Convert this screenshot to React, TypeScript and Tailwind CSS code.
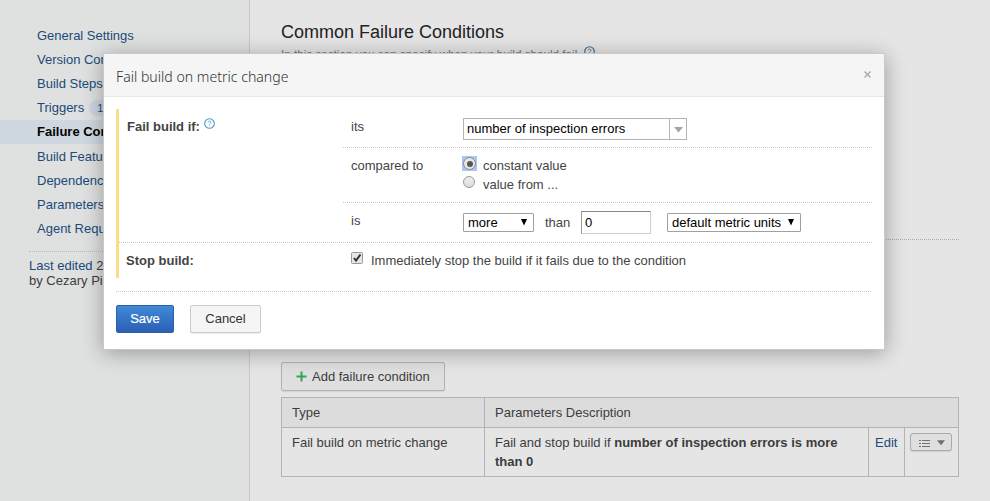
import type { ReactNode } from 'react';

const navItems = [
  'General Settings',
  'Version Control Settings',
  'Build Steps',
  'Triggers',
  'Failure Conditions',
  'Build Features',
  'Dependencies',
  'Parameters',
  'Agent Requirements',
];

function HelpIcon({ className = '' }: { className?: string }) {
  return (
    <svg width="11" height="11" viewBox="0 0 11 11" className={`shrink-0 ${className}`} fill="none">
      <circle cx="5.5" cy="5.5" r="4.8" stroke="currentColor" strokeWidth="1.1" />
      <path d="M4 4.4C4 2.6 7 2.6 7 4.3C7 5.4 5.5 5.3 5.5 6.6M5.5 7.4V8.3" stroke="currentColor" strokeWidth="1" opacity="0.8" />
    </svg>
  );
}

function Caret({ className = '' }: { className?: string }) {
  return (
    <svg width="9" height="6" viewBox="0 0 9 6" className={className}>
      <path d="M0 0H9L4.5 5.5Z" fill="currentColor" />
    </svg>
  );
}

function NativeSelect({ label, width }: { label: string; width: string }) {
  return (
    <div className={`-mt-px flex h-[19px] justify-between rounded-[1px] border border-[#a0a0a0] bg-white pl-1 pr-1.5 text-black ${width}`}>
      <span className="leading-[18px]">{label}</span>
      <svg width="6" height="7" viewBox="0 0 6 7" className="mt-[5px]">
        <path d="M0 0H6L3 6.5Z" fill="#000" />
      </svg>
    </div>
  );
}

function Row({ label, className, children }: { label: string; className: string; children: ReactNode }) {
  return (
    <div className={`flex ${className}`}>
      <div className="w-[120px] shrink-0 pl-2 pt-px">{label}</div>
      {children}
    </div>
  );
}

const dotted =
  'bg-[repeating-linear-gradient(90deg,#c6c6c6_0_1px,transparent_1px_2px)] bg-[length:100%_1px] bg-bottom bg-no-repeat';

function Sidebar() {
  return (
    <aside className="w-[250px] shrink-0 border-r border-[#c6c8ca] bg-[#dfe1e0] pt-6">
      <nav>
        {navItems.map((item, i) => (
          <div
            key={item}
            className={`flex h-6 gap-[5px] overflow-hidden whitespace-nowrap pl-[37px] ${
              item === 'Failure Conditions' ? 'bg-[#cfd7e1] font-bold text-black' : 'text-[#1c4a78]'
            } ${i > 4 ? 'pt-px' : ''}`}
          >
            <span className="leading-6">{item}</span>
            {item === 'Triggers' && (
              <span className="mt-1 h-4 rounded-full bg-[#cdd5e1] px-2 text-[11px] leading-4">1</span>
            )}
          </div>
        ))}
      </nav>
      <div className="ml-[29px] mt-[11px] w-[190px] border-t border-dotted border-[#bbb] pt-1.5 leading-[15px] text-[#3c3c3c]">
        <div>
          <span className="text-[#1c4a78]">Last edited</span> 2 months ago
        </div>
        <div>by Cezary Piatek</div>
      </div>
    </aside>
  );
}

function Content() {
  return (
    <main className="w-[740px] pl-[31px] pt-5 text-[#3c3c3c]">
      <h1 className="text-[18px] leading-6 text-[#222]">Common Failure Conditions</h1>
      <p className="mt-[3px] flex h-[14px] gap-[3px] text-[11.7px] leading-[14px] text-[#777]">
        In this section you can specify when your build should fail.
        <HelpIcon className="-mt-px text-[#35698f]" />
      </p>
      <div className="mt-[178px] w-[678px] border-t border-dotted border-[#aaa]" />
      <button className="mt-[122px] flex h-[29px] w-[164px] items-center rounded-[2px] border border-[#b3b3b3] bg-[#dfdfdf] pl-3.5 shadow-[0_1px_1px_rgba(0,0,0,0.08)]">
        <svg width="11" height="11" viewBox="0 0 11 11" className="mr-[5px]">
          <path d="M5.5 0.5V10.5M0.5 5.5H10.5" stroke="#35a35b" strokeWidth="2" />
        </svg>
        Add failure condition
      </button>
      <table className="mt-1.5 w-[678px] table-fixed border-collapse text-left leading-[19px]">
        <colgroup>
          <col className="w-[203px]" />
          <col className="w-[384px]" />
          <col className="w-[36px]" />
          <col className="w-[54px]" />
        </colgroup>
        <thead>
          <tr className="h-[30px] bg-[#dcdcdc]">
            <th className="border border-[#b3b3b3] px-2.5 font-normal">Type</th>
            <th colSpan={3} className="border border-[#b3b3b3] px-2.5 font-normal">Parameters Description</th>
          </tr>
        </thead>
        <tbody>
          <tr className="h-[49px] align-top">
            <td className="border border-[#b3b3b3] px-2.5 pt-[5px]">Fail build on metric change</td>
            <td className="border border-[#b3b3b3] px-2.5 pt-[5px]">
              Fail and stop build if <b>number of inspection errors is more than 0</b>
            </td>
            <td className="border border-[#b3b3b3] pl-1.5 pt-[5px] text-[#1c4a78]">Edit</td>
            <td className="border border-[#b3b3b3] pl-[5px] pt-[5px]">
              <div className="flex h-[18px] w-[42px] items-center gap-[7px] rounded-[3px] border border-[#aaa] bg-[#dfdfdf] pl-2 text-[#707070] shadow-[0_1px_1px_rgba(0,0,0,0.1)]">
                <svg width="11" height="9" viewBox="0 0 11 9" className="mt-0.5" shapeRendering="crispEdges">
                  <path d="M0 1.5H2M3 1.5H11M0 4.5H2M3 4.5H11M0 7.5H2M3 7.5H11" stroke="currentColor" strokeWidth="1" />
                </svg>
                <Caret className="mt-0.5 w-2" />
              </div>
            </td>
          </tr>
        </tbody>
      </table>
    </main>
  );
}

function Dialog() {
  return (
    <div className="absolute left-[103px] top-[53px] h-[297px] w-[782px] border border-[#c9c9c9] bg-white text-[#444] shadow-[0_3px_20px_rgba(0,0,0,0.32)]">
      <header className="flex h-[43px] items-center justify-between border-b border-[#e8e8e8] bg-[#f5f5f5] pl-3 pr-[13px]">
        <h2 className="mt-[3px] font-['Noto_Sans',sans-serif] text-[14.1px] font-light text-[#333]">Fail build on metric change</h2>
        <svg width="7" height="7" viewBox="0 0 7 7" className="-mt-0.5">
          <path d="M0.5 0.5L6.5 6.5M6.5 0.5L0.5 6.5" stroke="#aaa" strokeWidth="1.4" />
        </svg>
      </header>
      <div className="px-3 pt-3">
        <div className="border-l-[3px] border-[#fade88]">
          <div className={`flex h-[134px] ${dotted}`}>
            <div className="flex w-[224px] gap-1 pl-2 pt-2.5 font-bold leading-4">
              Fail build if: <HelpIcon className="-mt-px text-[#4a97c9]" />
            </div>
            <div className="w-[529px]">
              <Row label="its" className={`h-[39px] pt-[9px] leading-4 ${dotted}`}>
                <div className="flex h-[22px] w-[224px] border border-[#b3b3bd] bg-white text-black">
                  <div className="w-[206px] border-r border-[#b3b3bd] pl-[3px] leading-5">number of inspection errors</div>
                  <div className="flex flex-1 items-center justify-center text-[#a3a3a3]">
                    <Caret className="mt-px" />
                  </div>
                </div>
              </Row>
              <Row label="compared to" className={`h-[55px] pt-[9px] leading-4 ${dotted}`}>
                <div className="leading-[19px]">
                  <div className="flex h-[19px] gap-1.5">
                    <span className="-ml-px -mt-px flex h-[15px] w-[15px] items-center justify-center bg-[#a9c7f5]">
                      <span className="flex size-[13px] items-center justify-center rounded-full border border-[#888] bg-[#e6e6e6]">
                        <span className="size-[6px] rounded-full bg-[#555]" />
                      </span>
                    </span>
                    <span className="-mt-px">constant value</span>
                  </div>
                  <div className="flex gap-2">
                    <span className="size-3 rounded-full border border-[#999] bg-linear-to-b from-[#eee] to-[#ddd]" />
                    <span className="-mt-px">value from ...</span>
                  </div>
                </div>
              </Row>
              <Row label="is" className="h-10 pt-[9px] leading-4">
                <div className="flex h-[22px] items-center">
                  <NativeSelect label="more" width="w-[71px]" />
                  <span className="ml-[11px] w-9">than</span>
                  <div className="-mt-px h-[23px] w-[70px] border border-[#ccc] border-l-[#999] border-t-[#888] bg-white pl-[3px] leading-[21px] text-black">0</div>
                  <div className="w-4" />
                  <NativeSelect label="default metric units" width="w-[134px]" />
                </div>
              </Row>
            </div>
          </div>
          <div className="flex h-[35px] pt-[9px] leading-4">
            <div className="w-[232px] pl-[7px] pt-px font-bold">Stop build:</div>
            <svg width="12" height="12" viewBox="0 0 12 12" className="mr-2">
              <rect x="0.5" y="0.5" width="11" height="11" rx="1" fill="#e6e6e6" stroke="#999" />
              <path d="M3 6L5 8.5L9.5 2.5" fill="none" stroke="#333" strokeWidth="2" />
            </svg>
            <span className="pt-px">Immediately stop the build if it fails due to the condition</span>
          </div>
        </div>
        <div className={`h-3.5 ${dotted}`} />
        <div className="flex gap-4 pt-[13px]">
          <button className="h-7 w-[58px] rounded-[2px] border border-[#2a5fae] bg-linear-to-b from-[#3f8ad6] to-[#2c5fb5] leading-[26px] text-white [-webkit-text-stroke:0.2px_white]">Save</button>
          <button className="h-7 w-[71px] rounded-[2px] border border-[#ccc] bg-[#f5f5f5] leading-[26px] text-[#333] shadow-[0_1px_1px_rgba(0,0,0,0.08)]">Cancel</button>
        </div>
      </div>
    </div>
  );
}

export default function App() {
  return (
    <div className="relative flex h-[501px] w-[990px] overflow-hidden bg-[#e5e5e5] font-['Liberation_Sans',Arial,sans-serif] text-[13px]">
      <Sidebar />
      <Content />
      <Dialog />
    </div>
  );
}
